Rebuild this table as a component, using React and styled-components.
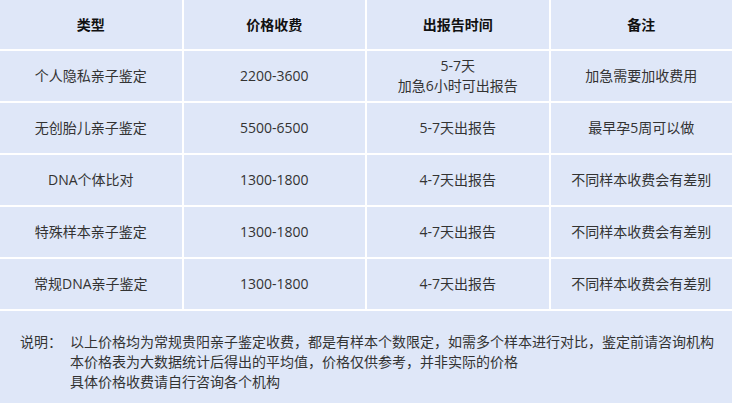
import React from 'react';
import styled, { createGlobalStyle } from 'styled-components';

const Global = createGlobalStyle`
  body {
    margin: 0;
    background: #fff;
    font-family: "Open Sans", "Noto Sans CJK SC", sans-serif;
    color: #333;
  }
`;

const Wrap = styled.div`
  width: 732px;
  height: 403px;
  display: flex;
  flex-direction: column;
  background: #fff;
`;

const Table = styled.div`
  display: grid;
  grid-template-columns: repeat(4, 1fr);
  grid-template-rows: 49px repeat(5, 50px);
  gap: 2px;
  background: #fff;
  padding-bottom: 2px;
`;

const Cell = styled.div`
  background: #dfe7f8;
  display: flex;
  flex-direction: column;
  align-items: center;
  justify-content: center;
  font-size: 14px;
  line-height: 20px;
  font-weight: ${p => (p.head ? 700 : 400)};
  color: ${p => (p.head ? '#111' : '#333')};
`;

const Note = styled.div`
  flex: 1;
  background: #dfe7f8;
  display: grid;
  grid-template-columns: 50px 1fr;
  padding: 21px 0 0 20px;
  font-size: 14px;
  line-height: 20px;
  color: #333;
`;

const Lines = styled.div`
  display: flex;
  flex-direction: column;
`;

const head = ['类型', '价格收费', '出报告时间', '备注'];

const rows = [
  ['个人隐私亲子鉴定', '2200-3600', ['5-7天', '加急6小时可出报告'], '加急需要加收费用'],
  ['无创胎儿亲子鉴定', '5500-6500', ['5-7天出报告'], '最早孕5周可以做'],
  ['DNA个体比对', '1300-1800', ['4-7天出报告'], '不同样本收费会有差别'],
  ['特殊样本亲子鉴定', '1300-1800', ['4-7天出报告'], '不同样本收费会有差别'],
  ['常规DNA亲子鉴定', '1300-1800', ['4-7天出报告'], '不同样本收费会有差别'],
];

export default function App() {
  return (
    <Wrap>
      <Global />
      <Table>
        {head.map(h => <Cell head key={h}>{h}</Cell>)}
        {rows.map((r, i) => (
          <React.Fragment key={i}>
            <Cell>{r[0]}</Cell>
            <Cell>{r[1]}</Cell>
            <Cell>{r[2].map(t => <span key={t}>{t}</span>)}</Cell>
            <Cell>{r[3]}</Cell>
          </React.Fragment>
        ))}
      </Table>
      <Note>
        <span>说明：</span>
        <Lines>
          <span>以上价格均为常规贵阳亲子鉴定收费，都是有样本个数限定，如需多个样本进行对比，鉴定前请咨询机构</span>
          <span>本价格表为大数据统计后得出的平均值，价格仅供参考，并非实际的价格</span>
          <span>具体价格收费请自行咨询各个机构</span>
        </Lines>
      </Note>
    </Wrap>
  );
}
